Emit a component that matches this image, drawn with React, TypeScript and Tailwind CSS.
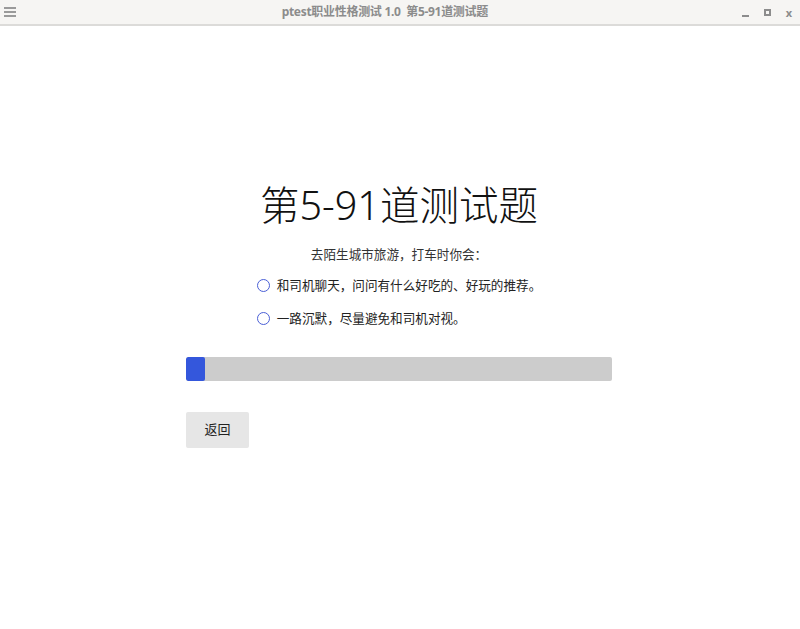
import React from 'react';

const options = ['和司机聊天，问问有什么好吃的、好玩的推荐。', '一路沉默，尽量避免和司机对视。'];

const font = { fontFamily: '"Noto Sans", "Noto Sans CJK SC", sans-serif' };

export default function App() {
  const [picked, setPicked] = React.useState<number | null>(null);

  return (
    <div className="w-[800px] h-[629px] bg-white flex flex-col overflow-hidden" style={font}>
      {/* title bar */}
      <div className="h-[26px] shrink-0 bg-[#f6f5f3] border-b-2 border-[#dcdbd9] flex items-center px-[4px] text-[#8c8c8c]">
        <div className="w-[12px] flex flex-col gap-[2px]">
          <span className="h-[2px] bg-[#9a9a9a]" />
          <span className="h-[2px] bg-[#9a9a9a]" />
          <span className="h-[2px] bg-[#9a9a9a]" />
        </div>
        <div className="flex-1 text-center text-[12px] font-bold tracking-[-0.3px] pl-[12px]">
          ptest职业性格测试 1.0&nbsp;&nbsp;第5-91道测试题
        </div>
        <div className="flex items-center gap-[15px] pr-[4px] text-[#8c8c8c]">
          <span className="w-[7px] h-[2px] bg-[#8c8c8c] mt-[8px]" />
          <span className="w-[7px] h-[7px] border-2 border-[#8c8c8c]" />
          <span className="text-[11px] font-bold leading-none">x</span>
        </div>
      </div>

      {/* content */}
      <div className="w-[426px] ml-[186px] flex flex-col pt-[153px]">
        <h1 className="text-center text-[39.5px] leading-[52px] font-light text-[#111]">第5-91道测试题</h1>
        <p className="text-center text-[12.6px] text-[#333] mt-[15px]">去陌生城市旅游，打车时你会：</p>
        <div className="mx-auto flex flex-col gap-[15px] mt-[12px]">
          {options.map((o, i) => (
            <label key={i} className="flex items-center gap-[7px] text-[12.6px] text-[#222] leading-[18px] cursor-pointer" onClick={() => setPicked(i)}>
              <span className="w-[13px] h-[13px] rounded-full border border-[#4a5fd6] bg-white flex items-center justify-center">
                {picked === i && <span className="w-[7px] h-[7px] rounded-full bg-[#3355dd]" />}
              </span>
              {o}
            </label>
          ))}
        </div>

        <div className="mt-[29px] h-[24px] bg-[#cccccc] rounded-[2px] overflow-hidden">
          <div className="h-full w-[19px] bg-[#3457dc] rounded-[2px]" />
        </div>

        <button className="mt-[31px] w-[63px] h-[36px] bg-[#e6e6e6] rounded-[2px] text-[13px] text-[#222]">返回</button>
      </div>
    </div>
  );
}
